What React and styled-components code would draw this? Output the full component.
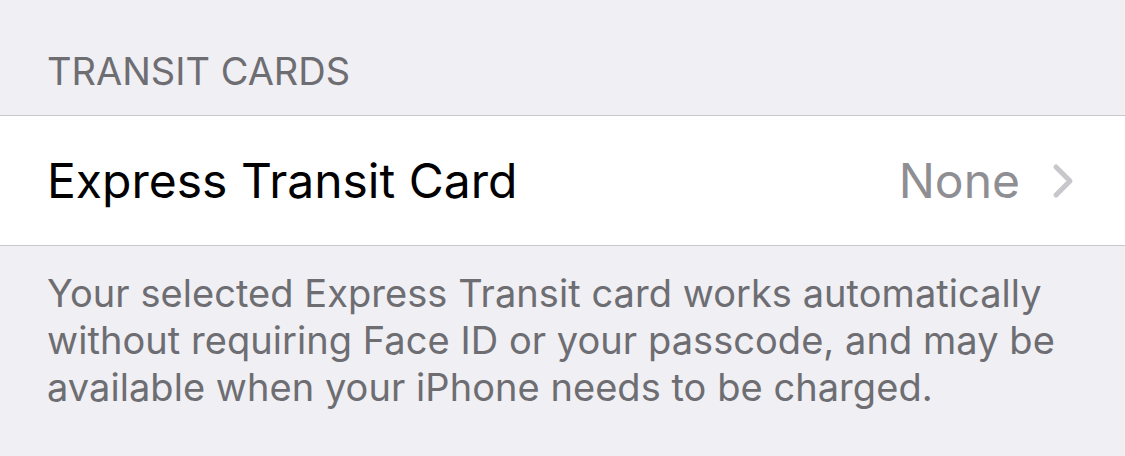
import React from "react";
import styled, { createGlobalStyle } from "styled-components";

const GlobalStyle = createGlobalStyle`
  html, body {
    margin: 0;
    padding: 0;
    background: #efeff4;
    font-family: Inter, "Noto Sans", sans-serif;
    -webkit-font-smoothing: antialiased;
  }
`;

const Page = styled.div`
  width: 1125px;
  height: 456px;
  overflow: hidden;
  background: #efeff4;
`;

const SectionHeader = styled.div`
  height: 115px;
  box-sizing: border-box;
  padding: 47px 47px 0;
  font-size: 38px;
  line-height: 48px;
  letter-spacing: 0;
  color: #6d6d72;
  text-transform: uppercase;
`;

const Row = styled.div`
  height: 129px;
  display: flex;
  align-items: center;
  padding: 0 51px 0 47px;
  background: #fff;
  border-top: 1px solid #c8c7cc;
  border-bottom: 1px solid #c8c7cc;
`;

const Label = styled.div`
  flex: 1;
  font-size: 48px;
  color: #000;
`;

const Value = styled.div`
  font-size: 48px;
  color: #8e8e93;
  margin-right: 32px;
`;

const Chevron = () => (
  <svg width="22" height="36" viewBox="0 0 22 36">
    <path
      d="M4 4 L18 18 L4 32"
      fill="none"
      stroke="#c7c7cc"
      strokeWidth="5"
      strokeLinecap="round"
      strokeLinejoin="round"
    />
  </svg>
);

const Footer = styled.p`
  margin: 0;
  padding: 24px 47px 0;
  font-size: 38px;
  line-height: 47px;
  color: #6d6d72;
  letter-spacing: 0.05px;
`;

export default function App() {
  return (
    <Page>
      <GlobalStyle />
      <SectionHeader>Transit Cards</SectionHeader>
      <Row>
        <Label>Express Transit Card</Label>
        <Value>None</Value>
        <Chevron />
      </Row>
      <Footer>
        Your selected Express Transit card works automatically
        <br />
        without requiring Face ID or your passcode, and may be
        <br />
        available when your iPhone needs to be charged.
      </Footer>
    </Page>
  );
}
